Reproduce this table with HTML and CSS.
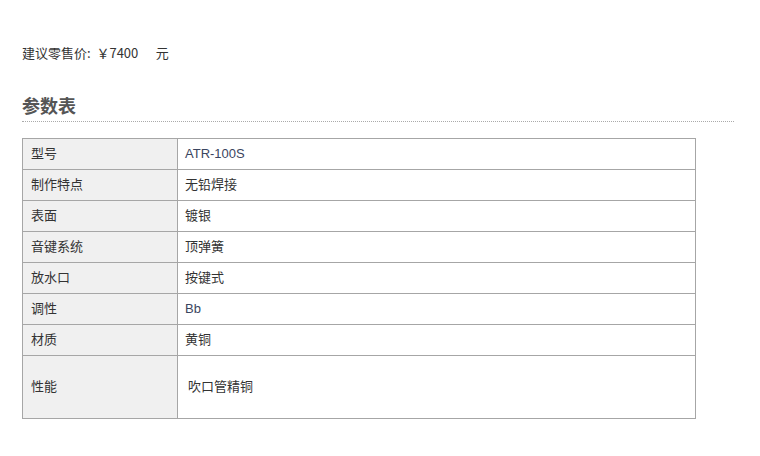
FILE: index.html
```html
<!DOCTYPE html>
<html lang="zh-CN">
<head>
<meta charset="utf-8">
<title>参数表</title>
<link rel="stylesheet" href="styles.css">
</head>
<body>
<div class="page">
  <p class="price">建议零售价:&nbsp; ￥7400&nbsp;&nbsp;&nbsp;&nbsp;&nbsp; 元</p>
  <h2 class="title">参数表</h2>
  <table class="params">
    <tr><td class="k">型号</td><td class="v en">ATR-100S</td></tr>
    <tr><td class="k">制作特点</td><td class="v">无铅焊接</td></tr>
    <tr><td class="k">表面</td><td class="v">镀银</td></tr>
    <tr><td class="k">音键系统</td><td class="v">顶弹簧</td></tr>
    <tr><td class="k">放水口</td><td class="v">按键式</td></tr>
    <tr><td class="k">调性</td><td class="v en">Bb</td></tr>
    <tr><td class="k">材质</td><td class="v">黄铜</td></tr>
    <tr class="tall"><td class="k">性能</td><td class="v">&nbsp;吹口管精铜</td></tr>
  </table>
</div>
</body>
</html>
```
FILE: styles.css
```css
html, body {
  margin: 0;
  padding: 0;
  background: #fff;
}
body {
  font-family: "Noto Sans CJK SC", "Liberation Sans", sans-serif;
  font-size: 13px;
  color: #333;
}
.page {
  padding: 44px 26px 0 22px;
}
.price {
  margin: 0;
  line-height: 18px;
  font-size: 13px;
  color: #333;
}
.title {
  margin: 31px 0 0 0;
  padding: 0 0 4px 0;
  font-size: 18px;
  line-height: 24px;
  font-weight: bold;
  color: #555;
  border-bottom: 1px dotted #aaa;
}
.params {
  margin-top: 16px;
  width: 674px;
  border-collapse: collapse;
  table-layout: fixed;
}
.params td {
  border: 1px solid #a6a6a6;
  padding: 0 0 3px 8px;
  font-size: 13px;
  line-height: 18px;
  color: #333;
  box-sizing: border-box;
  height: 31px;
}
.params td.k {
  width: 155px;
  background: #f0f0f0;
}
.params td.v {
  padding-left: 7px;
}
.params td.en {
  font-family: "Liberation Sans", sans-serif;
  font-size: 13px;
  padding-bottom: 1px;
  color: #3a4560;
}
.params tr.tall td {
  height: 63px;
}
```
